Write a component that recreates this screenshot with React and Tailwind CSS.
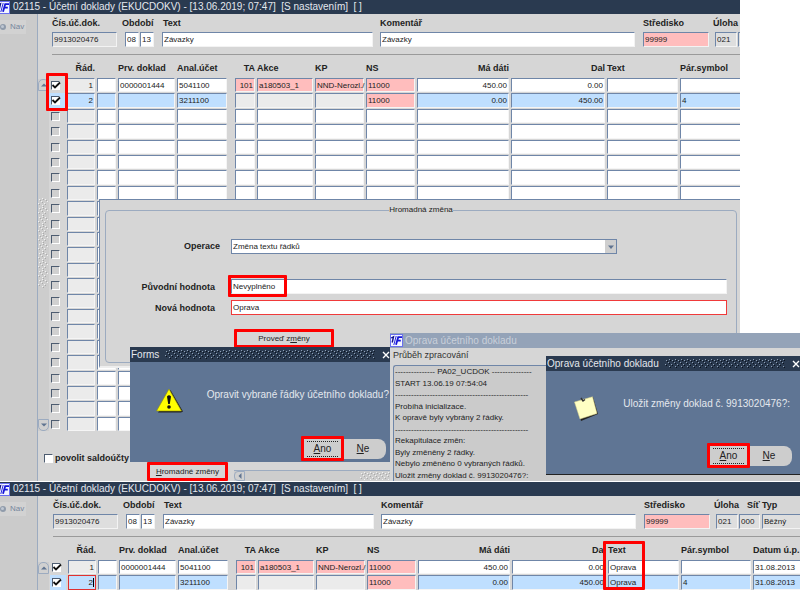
import React from "react";

const COLUMNS = [
  { key: "check", title: "", width: "w-[16px]" },
  { key: "row", title: "Řád.", width: "w-[28px]", right: true },
  { key: "flag", title: "", width: "w-[19px]" },
  { key: "first", title: "Prv. doklad", width: "w-[57px]" },
  { key: "account", title: "Anal.účet", width: "w-[50px]" },
  { key: "gap", title: "", width: "w-[4px]" },
  { key: "ta", title: "TA", width: "w-[20px]", right: true },
  { key: "action", title: "Akce", width: "w-[56px]" },
  { key: "kp", title: "KP", width: "w-[49px]" },
  { key: "ns", title: "NS", width: "w-[49px]" },
  { key: "debit", title: "Má dáti", width: "w-[92px]", right: true },
  { key: "credit", title: "Dal", width: "w-[94px]", right: true },
  { key: "text", title: "Text", width: "w-[71px]" },
  { key: "symbol", title: "Pár.symbol", width: "w-[70px]" },
  { key: "date", title: "Datum ú.p.", width: "w-[60px]" },
];

const ENTRIES = [
  { row: "1", first: "0000001444", account: "5041100", ta: "101", action: "a180503_1", kp: "NND-Nerozl./", ns: "11000", debit: "450.00", credit: "0.00", date: "31.08.2013" },
  { row: "2", account: "3211100", ns: "11000", debit: "0.00", credit: "450.00", symbol: "4", date: "31.08.2013" },
];

const PINK = "bg-[#ffbdbd]";
const BLUE = "bg-[#bfdfff]";
const PALE = "bg-[#ebebeb]";

function cellColor(key, index) {
  if (index < 2) {
    if (key === "ns") return PINK;
    if (["ta", "action", "kp"].includes(key)) return index === 0 ? PINK : PALE;
    if (index === 1) return BLUE;
  }
  return key === "row" ? PALE : "bg-white";
}

function Logo() {
  return (
    <svg className="h-[13px] w-[13px] shrink-0" viewBox="0 0 13 13" aria-hidden="true">
      <rect x="0.5" y="0.5" width="12" height="12" fill="#f4f6ff" stroke="#6a70ee" />
      <path d="M1.200 4L3.500 2.800L2.200 8.500" stroke="#10108c" strokeWidth="1.400" fill="none" />
      <path d="M6.200 2L3.800 11" stroke="#2a2ae0" strokeWidth="1" fill="none" />
      <path d="M12 3.200H8.200L6 10.800M7.500 6.700H10.800" stroke="#1414d8" strokeWidth="1.800" fill="none" />
    </svg>
  );
}

function Grip({ id, className, light, dark }) {
  return (
    <svg className={className} aria-hidden="true">
      <defs>
        <pattern id={id} width="6" height="9" patternUnits="userSpaceOnUse">
          <rect x="4" y="0" width="1" height="1" fill={light} />
          <rect x="5" y="1" width="1" height="1" fill={dark} />
          <rect x="1" y="1" width="1" height="1" fill={light} />
          <rect x="2" y="2" width="1" height="1" fill={dark} />
          <rect x="3" y="3" width="1" height="1" fill={light} />
          <rect x="4" y="4" width="1" height="1" fill={dark} />
          <rect x="0" y="5" width="1" height="1" fill={light} />
          <rect x="1" y="6" width="1" height="1" fill={dark} />
          <rect x="4" y="7" width="1" height="1" fill={light} />
          <rect x="5" y="8" width="1" height="1" fill={dark} />
        </pattern>
      </defs>
      <rect width="100%" height="100%" fill={`url(#${id})`} />
    </svg>
  );
}

function TitleBar({ children }) {
  return (
    <header className="flex h-[14px] items-center bg-[#2a3a50] text-[10px] leading-[14px] text-[#e4e8ee]">
      <div className="-ml-[3px] mr-[3px]"><Logo /></div>
      <h1 className="whitespace-pre">{children}</h1>
    </header>
  );
}

function ScrollButton({ direction, label }) {
  const path = { up: "M2 6.500L5 3.500L8 6.500Z", down: "M2 3.500L5 6.500L8 3.500Z", left: "M6.500 2L3.500 5L6.500 8Z" }[direction];
  const shape = {
    up: "h-[12px] w-[11px] rounded-t-[5px]",
    down: "h-[12px] w-[11px] rounded-b-[5px]",
    left: "h-[10px] w-[11px] rounded-l-[4px]",
  }[direction];
  return (
    <button type="button" aria-label={label} className={`flex shrink-0 items-center justify-center border border-[#9cabc0] bg-[#d0d0d0] ${shape}`}>
      <svg className="h-[10px] w-[10px] shrink-0" viewBox="0 0 10 10"><path d={path} fill="#5f7390" /></svg>
    </button>
  );
}

const INPUT = "h-[15px] border border-b-[#f3f3f3] border-r-[#f3f3f3] border-l-[#6f86a8] border-t-[#6f86a8] px-[1px] text-[8px] leading-[13px] text-[#222] outline-none";

function Field({ id, label, value, width, color = "bg-white", labelClass = "", inputClass = "" }) {
  return (
    <div className="flex flex-col gap-[3px]">
      <label htmlFor={id} className={`h-[12px] whitespace-nowrap text-[9px] font-bold leading-[12px] ${labelClass}`}>{label}</label>
      <input id={id} defaultValue={value} className={`${INPUT} ${width} ${color} ${inputClass}`} />
    </div>
  );
}

function DocumentFields({ id, full }) {
  return (
    <form className="grid h-[41px] grid-cols-[70px_40px_218px_263px_70px_25px_23px_60px] border-b border-[#9a9a9a] pt-[3px]">
      <Field id={`${id}-doc`} label="Čís.úč.dok." value="9913020476" width="w-[65px]" color="bg-[#dedede]" />
      <div className="flex flex-col gap-[3px]">
        <label htmlFor={`${id}-month`} className="h-[12px] text-[9px] font-bold leading-[12px]">Období</label>
        <div className="flex gap-[1px] pl-[3px]">
          <input id={`${id}-month`} defaultValue="08" className={`${INPUT} w-[14px] bg-white`} />
          <input aria-label="Rok" defaultValue="13" className={`${INPUT} w-[14px] bg-white`} />
        </div>
      </div>
      <Field id={`${id}-text`} label="Text" value="Závazky" width="w-[211px]" labelClass="pl-[1px]" />
      <Field id={`${id}-comment`} label="Komentář" value="Závazky" width="w-[255px]" />
      <Field id={`${id}-centre`} label="Středisko" value="99999" width="w-[66px]" color={PINK} />
      <Field id={`${id}-task`} label="Úloha" value="021" width="w-[22px]" color="bg-[#dedede]" inputClass="ml-[2px]" />
      {full ? (
        <>
          <Field id={`${id}-net`} label="Síť" value="000" width="w-[21px]" color="bg-[#dedede]" labelClass="pl-[8px]" />
          <Field id={`${id}-type`} label="Typ" value="Běžný" width="w-[60px]" color="bg-[#dedede]" />
        </>
      ) : (
        <input aria-label="Síť" className={`${INPUT} mt-[15px] w-[21px] bg-[#dedede]`} />
      )}
    </form>
  );
}

function EntryTable({ columns, rows, text, editing }) {
  return (
    <table className="w-0 table-fixed border-separate border-spacing-x-[2px] border-spacing-y-[1px] text-[8px] leading-[11px]">
      <colgroup>{columns.map((c) => <col key={c.key} className={c.width} />)}</colgroup>
      <thead>
        <tr className="h-[21px]">
          {columns.map((c) => (
            <th key={c.key} scope="col" className={`whitespace-nowrap p-0 pt-[3px] text-[9px] font-bold leading-[12px] ${c.right ? "text-right" : "text-left"}`}>
              <span className={c.right ? "float-right" : ""}>{c.title}</span>
            </th>
          ))}
        </tr>
      </thead>
      <tbody>
        {Array.from({ length: rows }, (_, i) => (
          <tr key={i} className={(i % 5) % 2 === 1 ? "h-[15px]" : "h-[14px]"}>
            {columns.map((c) => {
              if (c.key === "gap") return <td key={c.key} className="p-0" />;
              if (c.key === "check") {
                return (
                  <td key={c.key} className={`p-0 pl-[2px] ${i === 1 ? BLUE : ""}`}>
                    <input
                      type="checkbox"
                      aria-label={`Řádek ${i + 1}`}
                      defaultChecked={i < 2}
                      className={`block h-[9px] w-[9px] appearance-none border border-b-white border-r-white border-l-[#4d5c70] border-t-[#4d5c70] ${i < 2 ? "bg-white" : "bg-[#d0d0d0]"}`}
                    />
                    {i < 2 && (
                      <svg className="pointer-events-none -mt-[9px] block h-[9px] w-[10px]" viewBox="0 0 10 9" aria-hidden="true">
                        <path d="M1.500 4L4 6.500L9 1.500" stroke="#111" strokeWidth="1.800" fill="none" />
                      </svg>
                    )}
                  </td>
                );
              }
              const value = c.key === "text" ? (i < 2 ? text : "") : ENTRIES[i]?.[c.key];
              const active = editing && i === 1 && c.key === "row";
              const edge = active
                ? "border-[#e03030]"
                : "border-b-[#f5f5f5] border-r-[#f5f5f5] border-l-[#6f86a8] border-t-[#6f86a8]";
              return (
                <td key={c.key} className={`whitespace-nowrap border py-0 pl-[1px] text-[#222] ${edge} ${cellColor(c.key, i)} ${c.right ? "pr-[1px] text-right" : "pr-0"}`}>
                  {value}
                  {active && <span className="inline-block h-[9px] w-px bg-black align-middle" />}
                </td>
              );
            })}
          </tr>
        ))}
      </tbody>
    </table>
  );
}

function Sidebar() {
  return (
    <nav className="w-[38px] shrink-0 border-r border-[#9cabc0] bg-[#cbcbcb] pt-[6px]">
      <button type="button" className="flex h-[14px] w-[26px] items-center gap-[3px] bg-[#d2d2d2] text-[8px] text-[#75869d]">
        <svg className="h-[8px] w-[7px]" viewBox="0 0 7 8" aria-hidden="true">
          <circle cx="3" cy="4" r="3" fill="#8f9bab" />
          <circle cx="2.500" cy="3.500" r="1.500" fill="#bfc7d2" />
        </svg>
        Nav
      </button>
    </nav>
  );
}

function Hotkey({ before = "", letter, after }) {
  return <span>{before}<span className="underline">{letter}</span>{after}</span>;
}

function BulkChange() {
  const label = "text-right text-[9px] font-bold leading-[12px]";
  return (
    <section className="absolute left-[99px] right-0 top-[199px] h-[169px] border-b-2 border-l border-t border-b-[#eeeeee] border-l-[#6f86a8] border-t-[#6f86a8] bg-[#d6d6d6] pl-[5px] pr-[3px] pt-[4px]">
      <fieldset className="h-[159px] rounded-[4px] border border-[#9cabc0]">
        <legend className="mx-auto text-[8px] leading-[12px]">Hromadná změna</legend>
        <div className="flex h-[38px] items-end">
          <label htmlFor="operation" className={`mr-[11px] w-[114px] pb-[2px] ${label}`}>Operace</label>
          <div className="relative w-[386px]">
            <select id="operation" className="block h-[15px] w-full appearance-none border border-[#6f86a8] bg-white px-[1px] text-[8px] leading-[12px] outline-none">
              <option>Změna textu řádků</option>
            </select>
            <span className="pointer-events-none absolute right-px top-px flex h-[13px] w-[11px] items-center justify-center bg-[#cfcfcf]">
              <svg className="h-[4px] w-[6px]" viewBox="0 0 6 4"><path d="M0 0.500H6L3 4Z" fill="#5f7390" /></svg>
            </span>
          </div>
        </div>
        <div className="mt-[25px] flex items-center">
          <label htmlFor="old-value" className={`mr-[16px] w-[109px] ${label}`}>Původní hodnota</label>
          <div className="relative mr-[9px] flex-1">
            <input id="old-value" defaultValue="Nevyplněno" className={`${INPUT} block w-full bg-white`} />
            <span className="pointer-events-none absolute -left-[3px] -top-[4px] h-[22px] w-[59px] rounded-[1px] border-[3px] border-[#fe0000]" />
          </div>
        </div>
        <div className="mt-[6px] flex items-center">
          <label htmlFor="new-value" className={`mr-[16px] w-[109px] ${label}`}>Nová hodnota</label>
          <input id="new-value" defaultValue="Oprava" className="mr-[9px] h-[15px] flex-1 border border-[#f03a3a] bg-white px-[1px] text-[8px] leading-[13px] outline-none" />
        </div>
        <button type="button" className="ml-[128px] mt-[14px] block h-[19px] w-[100px] rounded-[1px] border-[3px] border-[#fe0000] bg-[#d6d6d6] text-[8px] leading-[12px]">
          <Hotkey before="Proveď z" letter="m" after="ěny" />
        </button>
      </fieldset>
    </section>
  );
}

function DialogTitle({ id, children }) {
  return (
    <header className="flex h-[15px] items-center gap-[6px] bg-[#2a3a50] pl-[1px] text-[10px] text-[#e4e8ee]">
      <h2 className="shrink-0 leading-[14px]">{children}</h2>
      <Grip id={id} className="h-[9px] min-w-0 flex-1" light="#8fa0b5" dark="#0c131d" />
      <button type="button" aria-label="Zavřít" className="flex h-[12px] w-[9px] shrink-0 items-center justify-center">
        <svg className="h-[8px] w-[8px]" viewBox="0 0 8 8"><path d="M1 1L7 7M7 1L1 7" stroke="#fff" strokeWidth="1.400" /></svg>
      </button>
    </header>
  );
}

function Answers() {
  return (
    <div className="flex items-center text-[10px] leading-[14px] text-[#222]">
      <button type="button" className="h-[25px] w-[43px] rounded-[1px] border-[3px] border-[#fe0000] bg-[#cdcdcd]">
        <span className="mx-[3px] block border-y border-dotted border-[#222]"><Hotkey letter="A" after="no" /></span>
      </button>
      <button type="button" className="h-[20px] w-[42px] rounded-r-[8px] bg-[#cdcdcd] pr-[4px]">
        <Hotkey letter="N" after="e" />
      </button>
    </div>
  );
}

function ConfirmDialog() {
  return (
    <section role="dialog" className="absolute left-[130px] top-[347px] flex h-[115px] w-[260px] flex-col bg-[#5f7594]">
      <DialogTitle id="grip-forms">Forms</DialogTitle>
      <div className="flex flex-1 items-start justify-between pl-[26px] pr-[1px] pt-[26px]">
        <svg className="h-[25px] w-[28px]" viewBox="0 0 28 25" aria-hidden="true">
          <path d="M14.500 2L27 23.500L25 24.500H2L3 23Z" fill="#222" />
          <path d="M13 1L25.500 23H0.500Z" fill="#ffff00" stroke="#8d8d10" strokeWidth="0.600" />
          <path d="M11 8.500Q13 6 15 8.500L13.800 16H12.200Z" fill="#111" />
          <circle cx="13" cy="19" r="1.800" fill="#111" />
        </svg>
        <p className="text-[10px] leading-[14px] text-[#e4e8ee]">Opravit vybrané řádky účetního dokladu?</p>
      </div>
      <div className="flex justify-end pb-[1px] pr-[4px]"><Answers /></div>
    </section>
  );
}

const LOG = [
  "--------------- PA02_UCDOK ---------------",
  "START 13.06.19 07:54:04",
  "--------------------------------------------------",
  "Probíhá inicializace.",
  "K opravě byly vybrány 2 řádky.",
  "--------------------------------------------------",
  "Rekapitulace změn:",
  "Byly změněny 2 řádky.",
  "Nebylo změněno 0 vybraných řádků.",
  "Uložit změny doklad č. 9913020476?:",
];

function ProgressWindow() {
  return (
    <section className="absolute left-[390px] right-0 top-[333px] flex h-[148px] flex-col bg-[#d6d6d6]">
      <header className="flex h-[15px] shrink-0 items-center gap-[2px] bg-[#94a3b8] text-[10px] text-[#c9d0da]">
        <Logo />
        <h2 className="leading-[14px]">Oprava účetního dokladu</h2>
      </header>
      <p className="h-[17px] shrink-0 pl-[3px] text-[9px] leading-[14px] text-[#333]">Průběh zpracování</p>
      <div className="ml-[3px] flex-1 rounded-tl-[3px] border-l border-t border-[#6f86a8] bg-[#cbcbcb] pl-[1px] text-[8px] text-[#222]">
        {LOG.map((line, i) => (
          <p key={i} className={`whitespace-nowrap ${i % 2 ? "leading-[11px]" : "leading-[12px]"}`}>{line}</p>
        ))}
      </div>
    </section>
  );
}

function SaveDialog() {
  return (
    <section role="dialog" className="absolute left-[546px] right-0 top-[356px] flex h-[119px] flex-col rounded-t-[2px] border-b border-[#222] bg-[#5f7594]">
      <DialogTitle id="grip-save">Oprava účetního dokladu</DialogTitle>
      <div className="flex flex-1 items-start justify-between pl-[28px] pr-[10px] pt-[25px]">
        <svg className="h-[26px] w-[25px]" viewBox="0 0 25 26" aria-hidden="true">
          <path d="M2 6L19 1L24 18L7 25Z" fill="#222" />
          <path d="M0.500 6L18.500 0.800L23 17.500L6 23Z" fill="#ffffc4" stroke="#d8d28c" strokeWidth="0.500" />
          <path d="M7 2L9 5L11 3.500" stroke="#333" strokeWidth="1.400" fill="none" />
        </svg>
        <p className="pt-[1px] text-[10px] leading-[14px] text-[#e4e8ee]">Uložit změny doklad č. 9913020476?:</p>
      </div>
      <div className="flex justify-end pb-[6px] pr-[8px]"><Answers /></div>
    </section>
  );
}

const TITLE = "02115 - Účetní doklady (EKUCDOKV) - [13.06.2019; 07:47]  [S nastavením]  [ ]";

export default function App() {
  return (
    <main className="relative h-screen overflow-hidden bg-white font-['Liberation_Sans',Arial,sans-serif] text-[#222]">
      <div className="relative mr-[60px] flex h-[481px] flex-col overflow-hidden bg-[#d6d6d6]">
        <TitleBar>{TITLE}</TitleBar>
        <div className="flex min-h-0 flex-1">
          <Sidebar />
          <div className="min-w-0 flex-1 overflow-hidden">
            <div className="pl-[14px]"><DocumentFields id="main" /></div>
            <div className="flex">
              <div className="mt-[24px] flex h-[352px] w-[11px] shrink-0 flex-col justify-between bg-[#cdcdcd]">
                <ScrollButton direction="up" label="Nahoru" />
                <Grip id="grip-bar" className="mb-[24px] h-[90px] w-[10px]" light="#f2f2f2" dark="#aaaaaa" />
                <ScrollButton direction="down" label="Dolů" />
              </div>
              <div className="-ml-[2px]">
                <EntryTable columns={COLUMNS.slice(0, 14)} rows={23} text="" />
              </div>
            </div>
            <div className="flex pl-[6px] pt-[20px]">
              <label className="flex items-center gap-[2px] whitespace-nowrap text-[9px] font-bold leading-[12px]">
                <input type="checkbox" className="h-[9px] w-[9px] appearance-none border border-b-white border-r-white border-l-[#4d5c70] border-t-[#4d5c70] bg-white" />
                povolit saldoúčty
              </label>
            </div>
          </div>
        </div>
        <button type="button" className="absolute bottom-0 left-[147px] h-[19px] w-[81px] rounded-[1px] border-[3px] border-[#fe0000] bg-[#d6d6d6] text-[8px] leading-[12px]">
          <Hotkey letter="H" after="romadné změny" />
        </button>
        <div className="absolute bottom-0 left-[234px] flex w-[156px] items-center justify-between border-t border-[#9cabc0] bg-[#cdcdcd]">
          <ScrollButton direction="left" label="Vlevo" />
          <Grip id="grip-horizontal" className="h-[8px] w-[30px]" light="#f2f2f2" dark="#aaaaaa" />
        </div>
        <span className="pointer-events-none absolute left-[46px] top-[73px] h-[38px] w-[22px] rounded-[1px] border-[3px] border-[#fe0000]" />
        <BulkChange />
      </div>

      <ConfirmDialog />
      <ProgressWindow />
      <SaveDialog />

      <div className="relative h-[109px] overflow-hidden border-t border-white bg-[#d6d6d6]">
        <TitleBar>{TITLE}</TitleBar>
        <div className="flex">
          <Sidebar />
          <div className="min-w-0 flex-1 overflow-hidden">
            <div className="pl-[15px]"><DocumentFields id="result" full /></div>
            <div className="flex">
              <div className="mt-[25px] w-[11px] shrink-0 bg-[#cdcdcd]">
                <ScrollButton direction="up" label="Nahoru" />
              </div>
              <div className="-ml-[1px]">
                <EntryTable columns={COLUMNS} rows={2} text="Oprava" editing />
              </div>
            </div>
          </div>
        </div>
        <span className="pointer-events-none absolute bottom-0 left-[603px] top-[59px] w-[42px] rounded-[1px] border-[3px] border-[#fe0000]" />
      </div>
    </main>
  );
}
